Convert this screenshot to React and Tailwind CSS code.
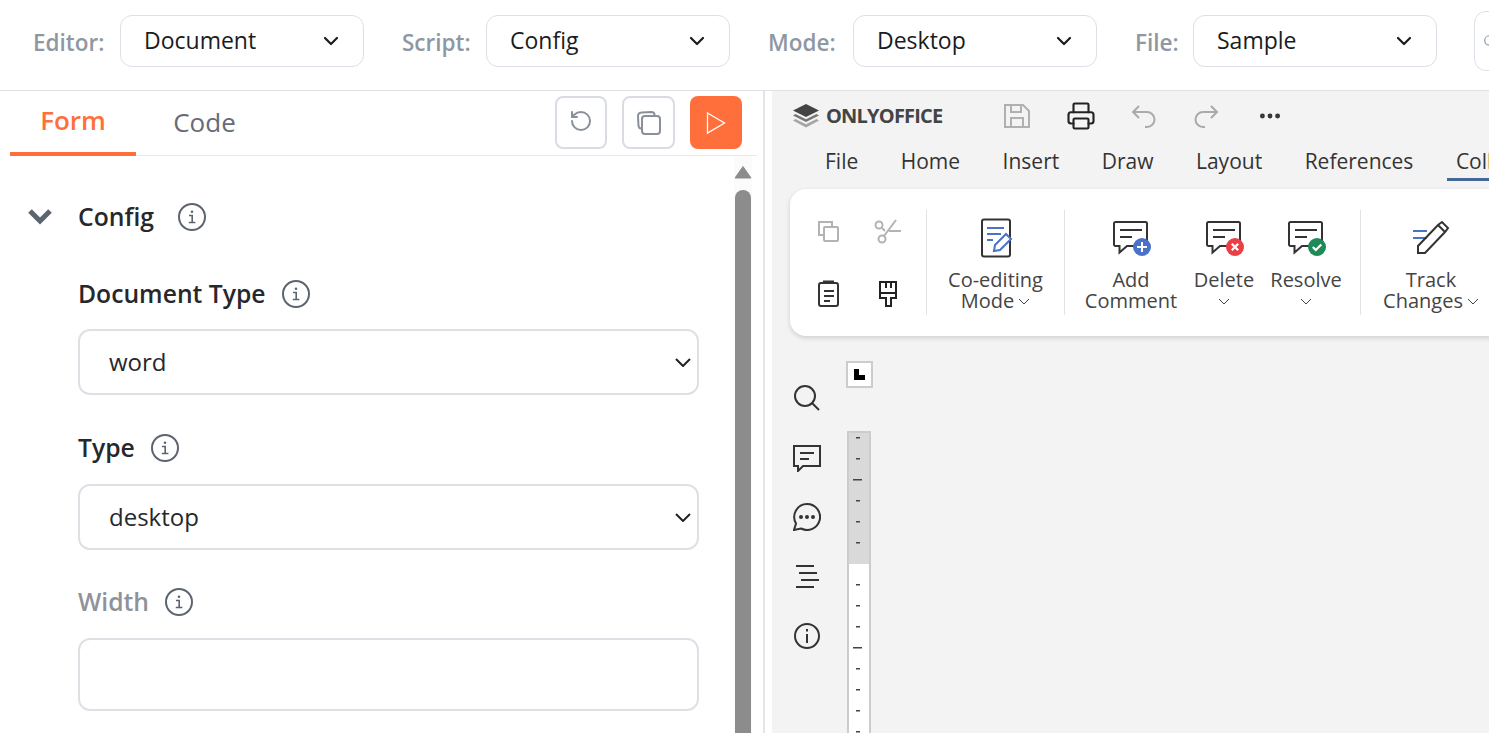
import { ChevronDown, RotateCcw, Search, Printer, MoreHorizontal } from 'lucide-react'

const FONT = "font-['Open_Sans','Noto_Sans',sans-serif]"

// ── Small drawn icons ─────────────────────────────────────────────────────────
function InfoIcon({ className = 'text-[#5c6470]' }) {
  return (
    <svg width="28" height="28" viewBox="0 0 28 28" fill="none" stroke="currentColor" className={`shrink-0 ${className}`}>
      <circle cx="14" cy="14" r="13" strokeWidth="2" />
      <circle cx="14" cy="8.8" r="1.3" fill="currentColor" stroke="none" />
      <path d="M11 12.5h3.2v7M10.8 19.5h6.6" strokeWidth="1.6" />
    </svg>
  )
}

function CommentIcon({ badge }) {
  return (
    <svg width="40" height="40" viewBox="0 0 40 40" fill="none">
      <path d="M3 5.5a1.5 1.5 0 0 1 1.500-1.500h30a1.500 1.500 0 0 1 1.500 1.500v21a1.500 1.500 0 0 1-1.500 1.500H16l-7.500 6.500V28H4.500A1.500 1.500 0 0 1 3 26.500z" stroke="#333" strokeWidth="2" />
      <path d="M9 12h22M9 19h12" stroke="#333" strokeWidth="2" />
      {badge === 'add' && (
        <>
          <circle cx="31" cy="29" r="9" fill="#4a72c8" />
          <path d="M31 24v10M26 29h10" stroke="#fff" strokeWidth="2" />
        </>
      )}
      {badge === 'del' && (
        <>
          <circle cx="31" cy="29" r="9" fill="#ea3f45" />
          <path d="M27.800 25.800l6.400 6.400M34.200 25.800l-6.400 6.400" stroke="#fff" strokeWidth="2.200" />
        </>
      )}
      {badge === 'ok' && (
        <>
          <circle cx="31" cy="29" r="9" fill="#1f8a57" />
          <path d="M26.800 29l3 3 5.500-5.500" stroke="#fff" strokeWidth="2.200" />
        </>
      )}
    </svg>
  )
}

function RibbonCaret() {
  return (
    <svg width="12" height="7" viewBox="0 0 12 7" fill="none" className="shrink-0 mt-[2px]">
      <path d="M1 1l5 5 5-5" stroke="#444" strokeWidth="1" />
    </svg>
  )
}

// ── Top bar select ────────────────────────────────────────────────────────────
function TopSelect({ label, value, labelWidth }) {
  return (
    <div className="flex items-center">
      <span style={{ width: labelWidth }} className="mt-1 text-[22.5px] font-semibold text-[#8f97a3] whitespace-nowrap">{label}</span>
      <div className="w-[244px] h-[52px] flex items-center justify-between pl-[23px] pr-[20px] bg-white border border-[#dcdfe5] rounded-xl text-[23px] text-[#1a1c20]">
        <span>{value}</span>
        <ChevronDown size={24} strokeWidth={2.2} className="text-[#1a1c20]" />
      </div>
    </div>
  )
}

// ── Form field ────────────────────────────────────────────────────────────────
function FieldLabel({ children, muted }) {
  return (
    <div className="flex items-center gap-[16px] h-[30px]">
      <span className={`text-[24.7px] font-semibold ${muted ? 'text-[#8f9399]' : 'text-[#26282c]'}`}>{children}</span>
      <InfoIcon />
    </div>
  )
}

function SelectField({ value }) {
  return (
    <div className="relative h-[66px] w-[621px] flex items-center pl-[29px] border-2 border-[#dde0e5] rounded-xl text-[24px] text-[#26282c] bg-white">
      {value}
      <svg width="16" height="9" viewBox="0 0 16 9" fill="none" className="absolute right-[6px] top-[27px]">
        <path d="M1 1l7 7 7-7" stroke="#222" strokeWidth="2" />
      </svg>
    </div>
  )
}

function RibbonItem({ width, icon, lines, caret, caretBelow }) {
  return (
    <div style={{ width }} className="flex flex-col items-center shrink-0 mt-[4px]">
      <div className="h-[40px] mb-[11px] flex items-center justify-center">{icon}</div>
      <div className="text-[20px] leading-[21px] text-[#444] text-center whitespace-nowrap">
        {lines.map((l, i) => (
          <div key={l} className="flex items-center justify-center gap-[4px]">
            {l}
            {caret && i === lines.length - 1 && <RibbonCaret />}
          </div>
        ))}
        {caretBelow && (
          <div className="h-[21px] flex items-center justify-center"><RibbonCaret /></div>
        )}
      </div>
    </div>
  )
}

const Sep = () => <div className="w-px h-[105px] bg-[#e3e3e3] shrink-0" />

function Ruler() {
  const ticks = [7, 28, 49, 70, 91, 112, 154, 175, 196, 217, 238, 259, 280, 301]
  return (
    <div className="relative w-[24px] h-[310px] mt-[43px] ml-[1px] border-x-2 border-[#cccccc] bg-white">
      <div className="h-[133px] bg-[#d9d9d9] border-t-2 border-[#cccccc]" />
      <svg width="20" height="310" viewBox="0 0 20 310" className="absolute left-0 top-0">
        {ticks.map(t => (
          <rect key={t} x={t === 49 || t === 217 ? 4 : 7} y={t - 1} width={t === 49 || t === 217 ? 9 : 4} height="1.500" fill="#444" />
        ))}
      </svg>
    </div>
  )
}

export default function App() {
  return (
    <div className={`${FONT} w-[1489px] h-[733px] overflow-hidden bg-white`}>

      {/* Top bar */}
      <div className="h-[91px] border-b border-[#dfe2e7] flex items-center pl-[33px] gap-[38px] pb-[9px] whitespace-nowrap">
        <TopSelect label="Editor:" value="Document" labelWidth={87} />
        <TopSelect label="Script:" value="Config" labelWidth={84} />
        <TopSelect label="Mode:" value="Desktop" labelWidth={85} />
        <TopSelect label="File:" value="Sample" labelWidth={58} />
        <div className="-ml-px w-[60px] h-[60px] shrink-0 border border-[#dcdfe5] rounded-xl flex items-center pl-[8px]">
          <Search size={14} className="text-[#8f97a3]" />
        </div>
      </div>

      <div className="flex h-[642px]">

        {/* Left panel */}
        <div className="w-[765px] shrink-0 border-r-2 border-[#e2e5ea] flex flex-col">
          <div className="h-[65px] ml-[10px] w-[747px] border-b border-[#e8eaee] flex items-stretch shrink-0">
            <div className="w-[126px] h-[65px] flex items-center justify-center border-b-4 border-[#ff6f3c] text-[26px] font-semibold text-[#ff6f3c] pb-[2px]">Form</div>
            <div className="w-[137px] flex items-center justify-center text-[26px] text-[#666c75] pb-[2px]">Code</div>
            <div className="ml-auto flex items-start pt-[5px] gap-[15px] pr-[15px]">
              <button className="w-[52px] h-[53px] flex items-center justify-center border-2 border-[#d9dde3] rounded-lg">
                <RotateCcw size={24} strokeWidth={2} className="text-[#89909a] -mt-1" />
              </button>
              <button className="w-[53px] h-[53px] flex items-center justify-center border-2 border-[#d9dde3] rounded-lg">
                <svg width="28" height="28" viewBox="0 0 28 28" fill="none" stroke="#89909a" strokeWidth="2">
                  <rect x="7" y="7" width="18" height="18" rx="3" />
                  <path d="M6 19.500A3 3 0 0 1 3.500 17L3 7a3.500 3.500 0 0 1 3.500-3.500l10-.5a3 3 0 0 1 3 3" />
                </svg>
              </button>
              <button className="w-[52px] h-[53px] flex items-center justify-center bg-[#ff6f3c] rounded-lg">
                <svg width="22" height="24" viewBox="0 0 22 24" fill="none" stroke="#fff" strokeWidth="1.300">
                  <path d="M2.500 2l17 10-17 10z" />
                </svg>
              </button>
            </div>
          </div>

          <div className="flex flex-1 min-h-0">
            {/* Form body */}
            <div className="w-[734px] shrink-0 pt-[46px] pl-[78px]">
              <div className="relative flex items-center gap-[24px] h-[30px]">
                <svg width="26" height="18" viewBox="0 0 26 18" fill="none" className="absolute -left-[51px] top-[6px]">
                  <path d="M3 3l10 10L23 3" stroke="#5c6470" strokeWidth="5" />
                </svg>
                <span className="text-[24.7px] font-semibold text-[#26282c]">Config</span>
                <InfoIcon />
              </div>
              <div className="mt-[47px]"><FieldLabel>Document Type</FieldLabel></div>
              <div className="mt-[20px]"><SelectField value="word" /></div>
              <div className="mt-[38px]"><FieldLabel>Type</FieldLabel></div>
              <div className="mt-[21px]"><SelectField value="desktop" /></div>
              <div className="mt-[37px]"><FieldLabel muted>Width</FieldLabel></div>
              <div className="mt-[21px] w-[621px] h-[73px] border-2 border-[#dde0e5] rounded-xl" />
            </div>

            {/* Scrollbar */}
            <div className="w-[18px] shrink-0 bg-[#fbfbfb] flex flex-col items-center pt-[9px]">
              <svg width="18" height="14" viewBox="0 0 18 14">
                <path d="M9 1.500L17 13H1z" fill="#8c8c8c" stroke="#8c8c8c" strokeLinejoin="round" />
              </svg>
              <div className="mt-[11px] w-[16px] flex-1 rounded-t-lg bg-[#8c8c8c]" />
            </div>
          </div>
        </div>

        <div className="w-[7px] shrink-0" />

        {/* Right panel: document editor */}
        <div className="flex-1 min-w-0 bg-[#f3f3f3] overflow-hidden">
          <div className="h-[49px] pl-[20px] flex items-center whitespace-nowrap">
            <svg width="28" height="26" viewBox="0 0 28 26" className="shrink-0">
              <path d="M14 1L27 7.500 14 14 1 7.500z" fill="#444" />
              <path d="M3.500 11L14 16.300 24.500 11 27 12.500 14 19 1 12.500z" fill="#777" />
              <path d="M3.500 16L14 21.300 24.500 16 27 17.500 14 24.500 1 17.500z" fill="#a5a5a5" />
            </svg>
            <span className="ml-[6px] w-[117px] text-[20px] font-bold tracking-[-0.8px] text-[#444]">ONLYOFFICE</span>
            <svg width="28" height="28" viewBox="0 0 28 28" fill="none" stroke="#b0b0b0" strokeWidth="2" className="ml-[60px] shrink-0">
              <path d="M2 3h18l6 6v16H2zM8 3v7h10V3M8 25v-9h12v9" />
            </svg>
            <Printer size={30} strokeWidth={1.7} className="ml-[35px] text-[#222] shrink-0" />
            <svg width="28" height="28" viewBox="0 0 28 28" fill="none" stroke="#aaa" strokeWidth="2" className="ml-[34px] shrink-0">
              <path d="M9 4L3 10l6 6M3 10h14a7 7 0 0 1 0 15h-2" />
            </svg>
            <svg width="28" height="28" viewBox="0 0 28 28" fill="none" stroke="#aaa" strokeWidth="2" className="ml-[34px] shrink-0">
              <path d="M19 4l6 6-6 6M25 10H11a7 7 0 0 0 0 15h2" />
            </svg>
            <MoreHorizontal size={26} strokeWidth={2.500} className="ml-[37px] text-[#333] shrink-0" />
          </div>

          <div className="h-[49px] pl-[53px] relative">
            <div className="flex gap-[42.5px] text-[21px] leading-[42px] text-[#333] whitespace-nowrap">
              <span>File</span><span>Home</span><span>Insert</span><span>Draw</span><span>Layout</span><span>References</span><span>Collaboration</span>
            </div>
            <div className="absolute left-[675px] top-[38px] w-[60px] h-[3px] bg-[#446995]" />
          </div>

          {/* Ribbon */}
          <div className="ml-[18px] w-[760px] h-[147px] bg-white rounded-l-2xl shadow-[0_2px_5px_rgba(0,0,0,0.15)] flex items-center">
            <div className="w-[136px] shrink-0 grid grid-cols-2 pl-[8px] pr-[8px]">
              <div className="h-[63px] flex items-center justify-center">
                <svg width="24" height="24" viewBox="0 0 24 24" fill="none" stroke="#b3b3b3" strokeWidth="2">
                  <path d="M7 16H3V3h13v4" /><rect x="8" y="8" width="14" height="14" rx="1" />
                </svg>
              </div>
              <div className="h-[63px] flex items-center justify-center">
                <svg width="28" height="26" viewBox="0 0 28 26" fill="none" stroke="#b3b3b3" strokeWidth="2">
                  <circle cx="5" cy="7" r="3.500" /><circle cx="8" cy="21" r="3.500" />
                  <path d="M8 10l3 3M10 18L22 2M15 13h12" />
                </svg>
              </div>
              <div className="h-[63px] flex items-center justify-center">
                <svg width="24" height="28" viewBox="0 0 24 28" fill="none" stroke="#333" strokeWidth="2">
                  <rect x="3" y="3" width="19" height="23" rx="2" />
                  <path d="M7 1.500h11M8 11h10M8 16h10M8 21h6" />
                </svg>
              </div>
              <div className="h-[63px] flex items-center justify-center">
                <svg width="20" height="28" viewBox="0 0 20 28" fill="none" stroke="#222" strokeWidth="2">
                  <path d="M2 2h16v16h-5v8H8v-8H2zM2 13h16M8 2v6M13 2v6" />
                </svg>
              </div>
            </div>
            <Sep />
            <RibbonItem
              width={137}
              lines={['Co-editing', 'Mode']}
              caret
              icon={
                <svg width="32" height="40" viewBox="0 0 32 40" fill="none">
                  <rect x="2" y="1.500" width="28" height="37" rx="2" stroke="#333" strokeWidth="2" />
                  <path d="M7 10h17M7 16h14M7 22h6" stroke="#4a72c8" strokeWidth="2" />
                  <path d="M14 33l1-6 11-11 5 5-11 11z" fill="#fff" stroke="#4a72c8" strokeWidth="2" />
                </svg>
              }
            />
            <Sep />
            <div className="w-[295px] shrink-0 flex items-start pl-[20px]">
              <RibbonItem width={92} lines={['Add', 'Comment']} icon={<CommentIcon badge="add" />} />
              <RibbonItem width={94} lines={['Delete']} caretBelow icon={<CommentIcon badge="del" />} />
              <RibbonItem width={70} lines={['Resolve']} caretBelow icon={<CommentIcon badge="ok" />} />
            </div>
            <Sep />
            <RibbonItem
              width={140}
              lines={['Track', 'Changes']}
              caret
              icon={
                <svg width="38" height="36" viewBox="0 0 38 36" fill="none">
                  <path d="M1 11h14M1 18h14" stroke="#4a72c8" strokeWidth="2" />
                  <path d="M6 33v-7L26 5l4-3 6 6-3 4-20 21zM26 5l7 7" stroke="#333" strokeWidth="2" />
                </svg>
              }
            />
          </div>

          {/* Editor canvas */}
          <div className="flex">
            <div className="w-[74px] shrink-0 pt-[48px] pr-[4px] flex flex-col items-center text-[#333]">
              <svg width="28" height="28" viewBox="0 0 28 28" fill="none" stroke="#333" strokeWidth="2">
                <circle cx="12" cy="12" r="10" /><path d="M19 19l7 7" />
              </svg>
              <svg width="30" height="28" viewBox="0 0 30 28" fill="none" stroke="#333" strokeWidth="2" className="mt-[32px]">
                <path d="M2 2h26v20H11l-5 5v-5H2zM8 9h14M8 15h9" />
              </svg>
              <svg width="28" height="28" viewBox="0 0 28 28" className="mt-[31px]">
                <path d="M14 1a13 13 0 1 1-6 24.500L1 27l2-6.500A13 13 0 0 1 14 1z" fill="none" stroke="#333" strokeWidth="2" />
                <circle cx="8" cy="14" r="2" fill="#333" /><circle cx="14" cy="14" r="2" fill="#333" /><circle cx="20" cy="14" r="2" fill="#333" />
              </svg>
              <svg width="26" height="26" viewBox="0 0 26 26" fill="none" stroke="#333" strokeWidth="2" className="mt-[33px]">
                <path d="M2 2h18M5 9h18M7 16h18M2 23h18" />
              </svg>
              <svg width="26" height="26" viewBox="0 0 26 26" fill="none" stroke="#333" strokeWidth="2" className="mt-[33px]">
                <circle cx="13" cy="13" r="12" /><path d="M13 11v9" /><path d="M13 6v2.500" />
              </svg>
            </div>
            <div className="pt-[25px]">
              <div className="w-[27px] h-[27px] border-2 border-[#cccccc] bg-white flex items-center justify-center">
                <div className="w-[11px] h-[11px] border-l-[5px] border-b-[5px] border-black" />
              </div>
              <Ruler />
            </div>
          </div>
        </div>
      </div>
    </div>
  )
}
